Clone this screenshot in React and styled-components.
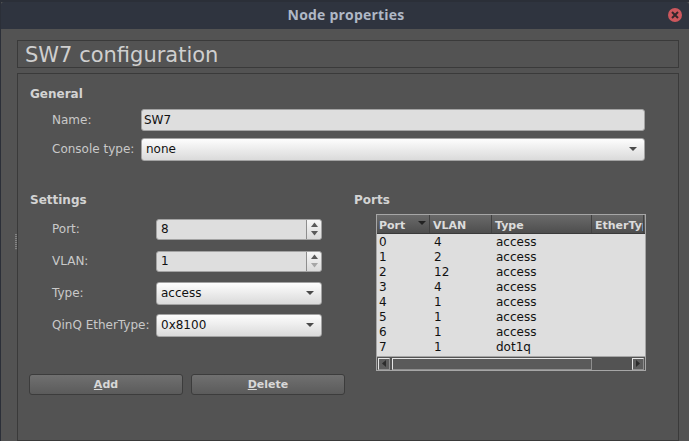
import styled, { createGlobalStyle } from 'styled-components';

const ports = [
	['0', '4', 'access'],
	['1', '2', 'access'],
	['2', '12', 'access'],
	['3', '4', 'access'],
	['4', '1', 'access'],
	['5', '1', 'access'],
	['6', '1', 'access'],
	['7', '1', 'dot1q'],
];

const columns = '53px 62px 100px 52px';

export default function App() {
	return (
		<>
			<Global />
			<Window>
				<TitleBar>
					<TitleText>Node properties</TitleText>
					<CloseButton>
						<svg width="8" height="8" viewBox="0 0 8 8">
							<path d="M1 1L7 7M7 1L1 7" stroke="#33272c" strokeWidth="2" />
						</svg>
					</CloseButton>
				</TitleBar>
				<Body>
					<Gutter>
						<Grip />
					</Gutter>
					<Content>
						<PageTitle>SW7 configuration</PageTitle>
						<Frame>
							<Heading>General</Heading>
							<GeneralForm>
								<Label>Name:</Label>
								<LineEdit>SW7</LineEdit>
								<Label>Console type:</Label>
								<Combo>
									none
									<ComboArrow />
								</Combo>
							</GeneralForm>
							<Columns>
								<SettingsColumn>
									<Heading>Settings</Heading>
									<SettingsForm>
										<Label>Port:</Label>
										<Spin value="8" />
										<Label>VLAN:</Label>
										<Spin value="1" downDisabled />
										<Label>Type:</Label>
										<Combo>
											access
											<ComboArrow />
										</Combo>
										<Label>QinQ EtherType:</Label>
										<Combo>
											0x8100
											<ComboArrow />
										</Combo>
									</SettingsForm>
									<Buttons>
										<Button>
											<u>A</u>dd
										</Button>
										<Button>
											<u>D</u>elete
										</Button>
									</Buttons>
								</SettingsColumn>
								<PortsColumn>
									<Heading>Ports</Heading>
									<Table>
										<HeaderRow>
											<HeaderCell>
												Port
												<SortArrow />
											</HeaderCell>
											<HeaderCell>VLAN</HeaderCell>
											<HeaderCell>Type</HeaderCell>
											<HeaderCell>EtherType</HeaderCell>
										</HeaderRow>
										<Rows>
											{ports.map(([port, vlan, type]) => (
												<Row key={port}>
													<span>{port}</span>
													<span>{vlan}</span>
													<span>{type}</span>
												</Row>
											))}
										</Rows>
										<ScrollBar>
											<ScrollButton>
												<svg width="4" height="7" viewBox="0 0 4 7">
													<path d="M4 0V7L0 3.5Z" fill="#2c2c2c" />
												</svg>
											</ScrollButton>
											<ScrollHandle />
											<ScrollButton>
												<svg width="4" height="7" viewBox="0 0 4 7">
													<path d="M0 0V7L4 3.5Z" fill="#2c2c2c" />
												</svg>
											</ScrollButton>
										</ScrollBar>
									</Table>
								</PortsColumn>
							</Columns>
						</Frame>
					</Content>
				</Body>
			</Window>
		</>
	);
}

function Spin({ value, downDisabled }) {
	return (
		<SpinBox>
			<SpinValue>{value}</SpinValue>
			<SpinButtons>
				<svg width="9" height="16" viewBox="0 0 9 16">
					<path d="M4.5 1.5L8 6H1Z" fill="#5a5a5a" />
					<path d="M1 10H8L4.5 14.5Z" fill={downDisabled ? '#a6a6a6' : '#5a5a5a'} />
				</svg>
			</SpinButtons>
		</SpinBox>
	);
}

const Global = createGlobalStyle`
	html, body {
		margin: 0;
		padding: 0;
		height: 441px;
		overflow: hidden;
		background: #2b2f38;
	}
	* {
		box-sizing: border-box;
	}
`;

const Window = styled.div`
	width: 688px;
	height: 439px;
	margin: 2px 0 0 1px;
	display: flex;
	flex-direction: column;
	font-family: 'DejaVu Sans', sans-serif;
	font-size: 12px;
	color: #d3d3d3;
	background: #535353;
`;

const TitleBar = styled.div`
	height: 27px;
	flex: none;
	display: flex;
	align-items: center;
	justify-content: center;
	position: relative;
	background: #2f343f;
	border-radius: 3px 3px 0 0;
`;

const TitleText = styled.div`
	margin: -2px 0 0 2px;
	font-family: 'Open Sans', sans-serif;
	font-weight: 700;
	font-size: 14px;
	letter-spacing: 0.2px;
	color: #afb8c6;
`;

const CloseButton = styled.div`
	position: absolute;
	right: 7px;
	top: 6px;
	width: 14px;
	height: 14px;
	border-radius: 50%;
	background: #cc575d;
	display: flex;
	align-items: center;
	justify-content: center;
`;

const Body = styled.div`
	flex: 1;
	display: flex;
	min-height: 0;
`;

const Gutter = styled.div`
	width: 16px;
	flex: none;
	display: flex;
	justify-content: flex-end;
	align-items: flex-start;
`;

const Grip = styled.div`
	width: 2px;
	height: 16px;
	margin-top: 205px;
	background: repeating-linear-gradient(#848484 0 1px, #5c5c5c 1px 2px);
`;

const Content = styled.div`
	width: 662px;
	flex: none;
	padding-top: 11px;
	display: flex;
	flex-direction: column;
	gap: 5px;
`;

const PageTitle = styled.div`
	height: 28px;
	flex: none;
	border: 1px solid #3a3a3a;
	padding-left: 7px;
	font-size: 21px;
	line-height: 28px;
	color: #cfcfcf;
`;

const Frame = styled.div`
	flex: 1;
	min-height: 0;
	border: 1px solid #3a3a3a;
	padding: 13px 0 0 12px;
`;

const Heading = styled.div`
	font-weight: 700;
	font-size: 12px;
	line-height: 15px;
	color: #d3d3d3;
`;

const Label = styled.div`
	font-size: 12px;
	color: #c9c9c9;
`;

const GeneralForm = styled.div`
	width: 615px;
	margin-top: 7px;
	padding-left: 22px;
	display: grid;
	grid-template-columns: 89px 504px;
	grid-auto-rows: 22px;
	row-gap: 7px;
	align-items: center;
`;

const LineEdit = styled.div`
	height: 22px;
	padding-left: 2px;
	display: flex;
	align-items: center;
	border: 1px solid #a3a3a3;
	border-radius: 3px;
	background: #dedede;
	color: #111;
`;

const Combo = styled.div`
	height: 23px;
	padding-left: 4px;
	position: relative;
	display: flex;
	align-items: center;
	border: 1px solid #a3a3a3;
	border-radius: 3px;
	background: linear-gradient(#fdfdfd, #dadada);
	color: #111;
`;

const ComboArrow = styled.span`
	position: absolute;
	right: 7px;
	top: 8px;
	border-style: solid;
	border-width: 4px 4px 0 4px;
	border-color: #4a4a4a transparent transparent transparent;
`;

const Columns = styled.div`
	margin-top: 33px;
	display: flex;
`;

const SettingsColumn = styled.div`
	width: 324px;
	flex: none;
`;

const SettingsForm = styled.div`
	margin-top: 10px;
	padding-left: 22px;
	display: grid;
	grid-template-columns: 104px 166px;
	grid-auto-rows: 22px;
	row-gap: 10px;
	align-items: center;
`;

const SpinBox = styled.div`
	height: 21px;
	display: flex;
	border: 1px solid #a3a3a3;
	border-radius: 3px;
	background: #dedede;
	color: #111;
`;

const SpinValue = styled.div`
	flex: 1;
	padding-left: 4px;
	line-height: 19px;
	border-right: 1px solid #8e8e8e;
`;

const SpinButtons = styled.div`
	width: 14px;
	flex: none;
	display: flex;
	align-items: center;
	justify-content: center;
	background: linear-gradient(#f6f6f6, #dadada);
	border-radius: 0 3px 3px 0;
`;

const Buttons = styled.div`
	margin: 37.5px 0 0 -1px;
	display: flex;
	gap: 8px;
`;

const Button = styled.div`
	width: 154px;
	height: 21px;
	display: flex;
	align-items: center;
	justify-content: center;
	font-weight: 700;
	font-size: 11px;
	color: #d8d8d8;
	border: 1px solid #3c3c3c;
	border-radius: 3px;
	background: linear-gradient(#707070, #5b5b5b);
`;

const PortsColumn = styled.div`
	display: flex;
	flex-direction: column;
`;

const Table = styled.div`
	width: 270px;
	height: 157px;
	margin: 6px 0 0 22px;
	display: flex;
	flex-direction: column;
	border: 1px solid #a6a6a6;
	background: #dedede;
	overflow: hidden;
`;

const HeaderRow = styled.div`
	height: 19px;
	flex: none;
	display: grid;
	grid-template-columns: ${columns};
	border-bottom: 1px solid #3a3a3a;
	background: linear-gradient(#6a6a6a, #4e4e4e);
`;

const HeaderCell = styled.div`
	position: relative;
	padding-left: 3px;
	font-weight: 700;
	font-size: 11px;
	line-height: 21px;
	color: #dcdcdc;
	white-space: nowrap;
	overflow: hidden;
	border-right: 1px solid #424242;
	&:first-child {
		padding-left: 2px;
	}
`;

const SortArrow = styled.span`
	position: absolute;
	right: 3px;
	top: 6px;
	border-style: solid;
	border-width: 4px 4px 0 4px;
	border-color: #222 transparent transparent transparent;
`;

const Rows = styled.div`
	flex: 1;
	padding-top: 1px;
`;

const Row = styled.div`
	height: 15px;
	display: grid;
	grid-template-columns: 55px 62px 100px;
	padding-left: 2px;
	font-size: 12px;
	line-height: 15px;
	color: #111;
`;

const ScrollBar = styled.div`
	height: 14px;
	flex: none;
	display: flex;
	align-items: center;
	gap: 2px;
	padding: 0 1px;
	border-top: 1px solid #a6a6a6;
	background: #535353;
`;

const ScrollButton = styled.div`
	width: 12px;
	height: 12px;
	flex: none;
	display: flex;
	align-items: center;
	justify-content: center;
	border: 1px solid #8e8e8e;
	border-top-color: #e6e6e6;
	border-left-color: #e6e6e6;
	background: #5d5d5d;
	&:last-child {
		margin-left: 38px;
	}
`;

const ScrollHandle = styled.div`
	width: 200px;
	height: 12px;
	flex: none;
	border: 1px solid #8e8e8e;
	border-top-color: #e6e6e6;
	border-left-color: #e6e6e6;
	background: #5a5a5a;
`;
